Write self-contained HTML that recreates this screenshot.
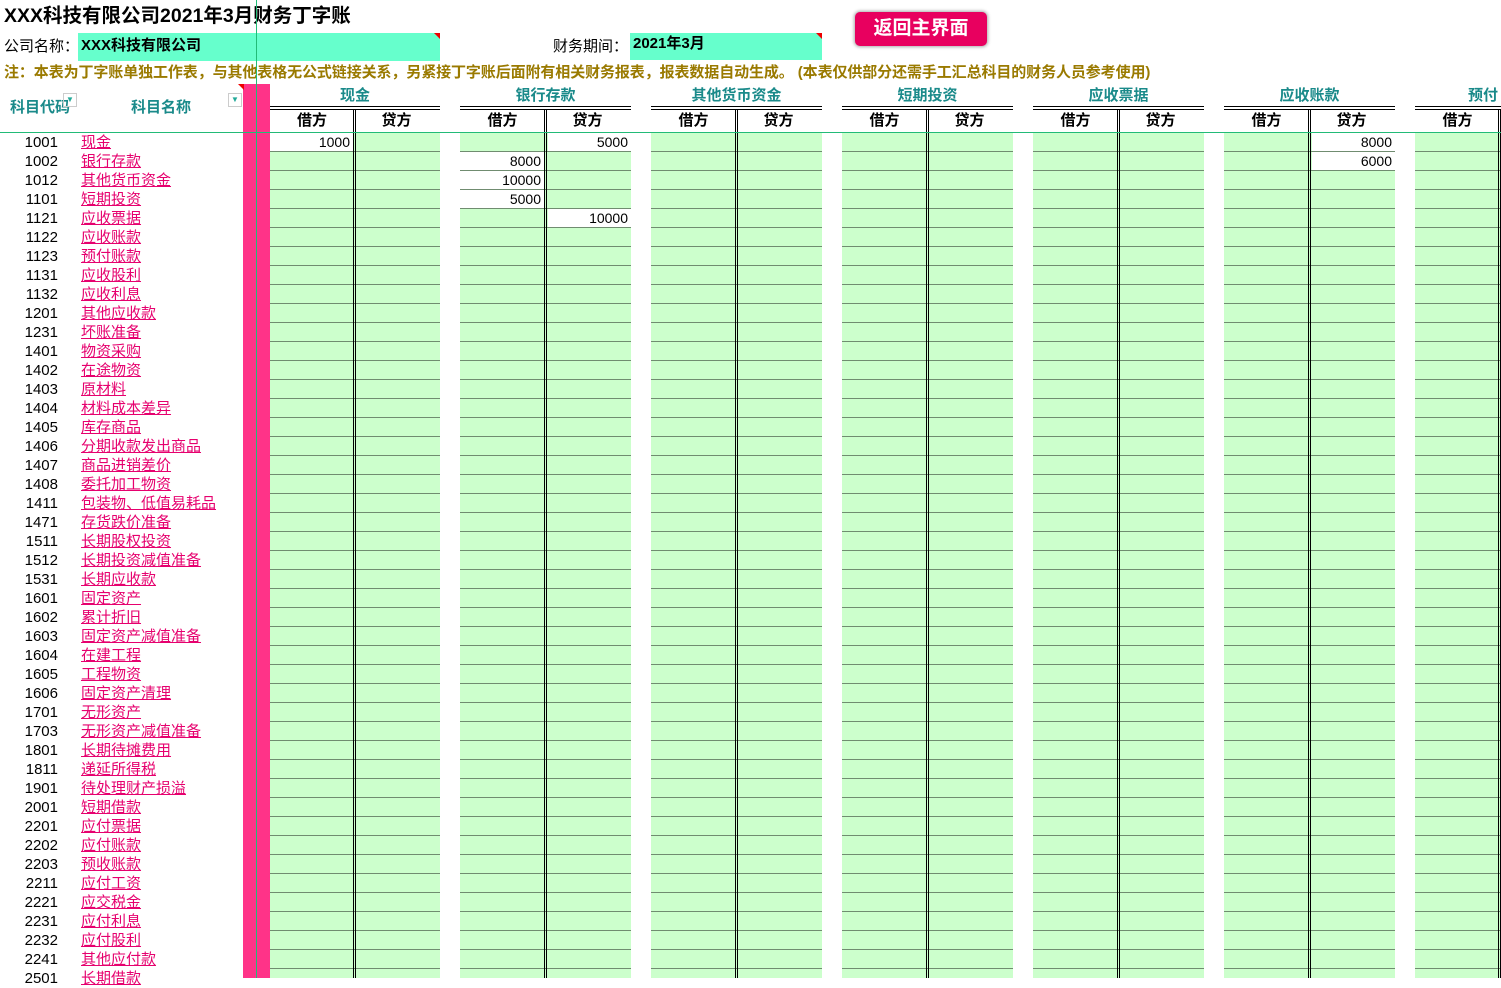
<!DOCTYPE html>
<html><head><meta charset="utf-8"><style>
*{margin:0;padding:0;box-sizing:border-box}
body{width:1501px;height:978px;overflow:hidden;background:#fff;position:relative;font-family:"Liberation Sans","Noto Sans CJK SC",sans-serif;color:#000}
.a{position:absolute}
.title{left:4px;top:3px;font-size:19.5px;font-weight:bold;line-height:26px;white-space:nowrap}
.lbl{font-size:15px;line-height:20px}
.box{background:#66ffcc;font-size:15px;font-weight:bold;line-height:26px;padding-left:3px}
.note{left:4px;top:63px;font-size:15px;font-weight:bold;color:#9a7a00;line-height:20px;white-space:nowrap;letter-spacing:-0.1px}
.btn{left:855px;top:12px;width:132px;height:34px;background:#e8005f;border-radius:5px;box-shadow:0 0 3px 1px #aaa;color:#fff;font-weight:bold;font-size:19px;text-align:center;line-height:34px}
.hd{color:#1a8a8a;font-weight:bold;font-size:15px;line-height:20px}
.col{top:133px;height:845px;background-color:#ccffcc;background-image:repeating-linear-gradient(to bottom,transparent 0 18px,rgba(0,0,0,.45) 18px 19px)}
.grp{top:106px;height:4px;border-top:1px solid #000;border-bottom:1px solid #000}
.gt{top:86px;text-align:center;color:#1a8a8a;font-weight:bold;font-size:15px;line-height:20px}
.sub{top:110px;height:22px;text-align:center;font-weight:bold;font-size:15px;line-height:22px}
.dv{top:110px;height:868px;width:3px;border-left:1px solid #000;border-right:1px solid #000}
.w{background:#fff;height:18px;font-size:14px;text-align:right;padding-right:3px;line-height:18px}
.rows{left:0;top:133px;width:243px}
.r{height:19px;position:relative;font-size:15px;line-height:19px}
.r b{position:absolute;right:185px;font-weight:normal}
.r i{position:absolute;left:81px;font-style:normal;color:#e6006e;text-decoration:underline;white-space:nowrap}
</style></head><body>
<div class="a title">XXX科技有限公司2021年3月财务丁字账</div>
<div class="a lbl" style="left:4px;top:37px">公司名称：</div>
<div class="a box" style="left:78px;top:33px;width:362px;height:28px">XXX科技有限公司</div>
<div class="a" style="left:434px;top:33px;border-top:6px solid #e00;border-left:6px solid transparent"></div>
<div class="a lbl" style="left:553px;top:37px">财务期间：</div>
<div class="a box" style="left:630px;top:33px;width:192px;height:27px;line-height:22px">2021年3月</div>
<div class="a" style="left:816px;top:33px;border-top:6px solid #e00;border-left:6px solid transparent"></div>
<div class="a btn">返回主界面</div>
<div class="a note">注：本表为丁字账单独工作表，与其他表格无公式链接关系，另紧接丁字账后面附有相关财务报表，报表数据自动生成。 (本表仅供部分还需手工汇总科目的财务人员参考使用)</div>
<div class="a hd" style="left:10px;top:98px">科目代码</div>
<div class="a hd" style="left:131px;top:98px">科目名称</div>
<div class="a" style="left:63px;top:93px;width:14px;height:14px;border:1px solid #ccc;font-size:8px;color:#2a9;text-align:center;line-height:12px">▼</div>
<div class="a" style="left:228px;top:93px;width:14px;height:14px;border:1px solid #ccc;font-size:8px;color:#2a9;text-align:center;line-height:12px">▼</div>
<div class="a" style="left:243px;top:84px;width:27px;height:894px;background:#ff3388"></div>
<div class="a" style="left:238px;top:84px;border-top:6px solid #e00;border-left:6px solid transparent"></div>

<div class="a col" style="left:270px;width:170px"></div>
<div class="a col" style="left:460px;width:171px"></div>
<div class="a col" style="left:651px;width:171px"></div>
<div class="a col" style="left:842px;width:171px"></div>
<div class="a col" style="left:1033px;width:171px"></div>
<div class="a col" style="left:1224px;width:171px"></div>
<div class="a col" style="left:1415px;width:86px"></div>

<div class="a grp" style="left:270px;width:170px"></div>
<div class="a grp" style="left:460px;width:171px"></div>
<div class="a grp" style="left:651px;width:171px"></div>
<div class="a grp" style="left:842px;width:171px"></div>
<div class="a grp" style="left:1033px;width:171px"></div>
<div class="a grp" style="left:1224px;width:171px"></div>
<div class="a grp" style="left:1415px;width:86px"></div>

<div class="a gt" style="left:270px;width:170px">现金</div>
<div class="a gt" style="left:460px;width:171px">银行存款</div>
<div class="a gt" style="left:651px;width:171px">其他货币资金</div>
<div class="a gt" style="left:842px;width:171px">短期投资</div>
<div class="a gt" style="left:1033px;width:171px">应收票据</div>
<div class="a gt" style="left:1224px;width:171px">应收账款</div>
<div class="a gt" style="left:1443px;width:80px">预付</div>

<div class="a sub" style="left:270px;width:84px">借方</div><div class="a sub" style="left:355px;width:83px">贷方</div>
<div class="a sub" style="left:460px;width:85px">借方</div><div class="a sub" style="left:546px;width:83px">贷方</div>
<div class="a sub" style="left:651px;width:85px">借方</div><div class="a sub" style="left:737px;width:83px">贷方</div>
<div class="a sub" style="left:842px;width:85px">借方</div><div class="a sub" style="left:928px;width:83px">贷方</div>
<div class="a sub" style="left:1033px;width:85px">借方</div><div class="a sub" style="left:1119px;width:83px">贷方</div>
<div class="a sub" style="left:1224px;width:85px">借方</div><div class="a sub" style="left:1310px;width:83px">贷方</div>
<div class="a sub" style="left:1415px;width:85px">借方</div>

<div class="a dv" style="left:353px"></div>
<div class="a dv" style="left:544px"></div>
<div class="a dv" style="left:735px"></div>
<div class="a dv" style="left:926px"></div>
<div class="a dv" style="left:1117px"></div>
<div class="a dv" style="left:1308px"></div>
<div class="a dv" style="left:1498px"></div>

<div class="a w" style="left:270px;top:133px;width:83px">1000</div>
<div class="a w" style="left:548px;top:133px;width:83px">5000</div>
<div class="a w" style="left:460px;top:152px;width:84px">8000</div>
<div class="a w" style="left:460px;top:171px;width:84px">10000</div>
<div class="a w" style="left:460px;top:190px;width:84px">5000</div>
<div class="a w" style="left:548px;top:209px;width:83px">10000</div>
<div class="a w" style="left:1312px;top:133px;width:83px">8000</div>
<div class="a w" style="left:1312px;top:152px;width:83px">6000</div>

<div class="a" style="left:0;top:132px;width:1501px;height:1px;background:#22bb77"></div>
<div class="a" style="left:256px;top:0;width:1px;height:978px;background:#22bb77"></div>

<div class="a rows">
<div class="r"><b>1001</b><i>现金</i></div>
<div class="r"><b>1002</b><i>银行存款</i></div>
<div class="r"><b>1012</b><i>其他货币资金</i></div>
<div class="r"><b>1101</b><i>短期投资</i></div>
<div class="r"><b>1121</b><i>应收票据</i></div>
<div class="r"><b>1122</b><i>应收账款</i></div>
<div class="r"><b>1123</b><i>预付账款</i></div>
<div class="r"><b>1131</b><i>应收股利</i></div>
<div class="r"><b>1132</b><i>应收利息</i></div>
<div class="r"><b>1201</b><i>其他应收款</i></div>
<div class="r"><b>1231</b><i>坏账准备</i></div>
<div class="r"><b>1401</b><i>物资采购</i></div>
<div class="r"><b>1402</b><i>在途物资</i></div>
<div class="r"><b>1403</b><i>原材料</i></div>
<div class="r"><b>1404</b><i>材料成本差异</i></div>
<div class="r"><b>1405</b><i>库存商品</i></div>
<div class="r"><b>1406</b><i>分期收款发出商品</i></div>
<div class="r"><b>1407</b><i>商品进销差价</i></div>
<div class="r"><b>1408</b><i>委托加工物资</i></div>
<div class="r"><b>1411</b><i>包装物、低值易耗品</i></div>
<div class="r"><b>1471</b><i>存货跌价准备</i></div>
<div class="r"><b>1511</b><i>长期股权投资</i></div>
<div class="r"><b>1512</b><i>长期投资减值准备</i></div>
<div class="r"><b>1531</b><i>长期应收款</i></div>
<div class="r"><b>1601</b><i>固定资产</i></div>
<div class="r"><b>1602</b><i>累计折旧</i></div>
<div class="r"><b>1603</b><i>固定资产减值准备</i></div>
<div class="r"><b>1604</b><i>在建工程</i></div>
<div class="r"><b>1605</b><i>工程物资</i></div>
<div class="r"><b>1606</b><i>固定资产清理</i></div>
<div class="r"><b>1701</b><i>无形资产</i></div>
<div class="r"><b>1703</b><i>无形资产减值准备</i></div>
<div class="r"><b>1801</b><i>长期待摊费用</i></div>
<div class="r"><b>1811</b><i>递延所得税</i></div>
<div class="r"><b>1901</b><i>待处理财产损溢</i></div>
<div class="r"><b>2001</b><i>短期借款</i></div>
<div class="r"><b>2201</b><i>应付票据</i></div>
<div class="r"><b>2202</b><i>应付账款</i></div>
<div class="r"><b>2203</b><i>预收账款</i></div>
<div class="r"><b>2211</b><i>应付工资</i></div>
<div class="r"><b>2221</b><i>应交税金</i></div>
<div class="r"><b>2231</b><i>应付利息</i></div>
<div class="r"><b>2232</b><i>应付股利</i></div>
<div class="r"><b>2241</b><i>其他应付款</i></div>
<div class="r"><b>2501</b><i>长期借款</i></div>
</div>
</body></html>
